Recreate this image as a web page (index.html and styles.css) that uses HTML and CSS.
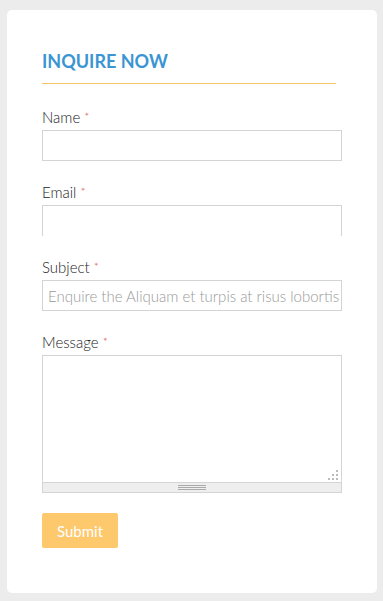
FILE: index.html
```html
<!DOCTYPE html>
<html lang="en">
<head>
    <meta charset="UTF-8">
    <meta name="viewport" content="width=device-width, initial-scale=1.0">
    <title>Inquire Now</title>
    <link rel="stylesheet" href="styles.css">
</head>
<body>
    <div class="card">
        <h2 class="title">INQUIRE NOW</h2>
        <form class="inquiry-form" onsubmit="return false">
            <div class="field">
                <label for="name">Name <span class="req">*</span></label>
                <input type="text" id="name">
            </div>
            <div class="field">
                <label for="email">Email <span class="req">*</span></label>
                <input type="email" id="email" class="open-bottom">
            </div>
            <div class="field">
                <label for="subject">Subject <span class="req">*</span></label>
                <input type="text" id="subject" placeholder="Enquire the Aliquam et turpis at risus lobortis">
            </div>
            <div class="field">
                <label for="message">Message <span class="req">*</span></label>
                <div class="textarea-wrap">
                    <textarea id="message"></textarea>
                    <svg class="corner-dots" width="10" height="10" viewBox="0 0 10 10">
                        <rect x="8" y="0" width="2" height="2" fill="#bbb"/>
                        <rect x="4" y="4" width="2" height="2" fill="#bbb"/>
                        <rect x="8" y="4" width="2" height="2" fill="#bbb"/>
                        <rect x="0" y="8" width="2" height="2" fill="#bbb"/>
                        <rect x="4" y="8" width="2" height="2" fill="#bbb"/>
                        <rect x="8" y="8" width="2" height="2" fill="#bbb"/>
                    </svg>
                    <div class="grippie"><span class="grip-lines"></span></div>
                </div>
            </div>
            <button type="submit" class="submit-btn">Submit</button>
        </form>
    </div>
</body>
</html>
```

FILE: styles.css
```css
* {
    margin: 0;
    padding: 0;
    box-sizing: border-box;
}
body
{
    background: #ececec;
    padding: 10px 6px 8px 7px;
    font-family: Lato, "Open Sans", sans-serif;
    color: #333;
}
.card
{
    background: #fff;
    border-radius: 5px;
    padding: 40px 35px 45px 35px;
    min-height: 583px;
}
.title
{
    font-size: 18px;
    line-height: 22px;
    font-weight: bold;
    color: #3b95d3;
    padding-bottom: 11px;
    border-bottom: 1px solid #f5c469;
    margin-right: 6px;
    margin-bottom: 23px;
}
.field
{
    margin-bottom: 21px;
}
.field label
{
    display: block;
    font-size: 15px;
    line-height: 20px;
    font-weight: 300;
    margin-bottom: 3px;
    color: #222;
}
.req
{
    color: #d9534f;
    font-size: 12px;
    vertical-align: top;
}
.field input
{
    display: block;
    width: 300px;
    height: 31px;
    border: 1px solid #d4d4d4;
    padding: 0 0 0 5px;
    font-family: Lato, sans-serif;
    font-size: 15px;
    font-weight: 300;
    color: #333;
    outline: none;
}
.field input::placeholder
{
    color: #999;
}
.field input.open-bottom
{
    border-bottom: none;
}
.textarea-wrap
{
    position: relative;
    width: 300px;
}
.textarea-wrap textarea
{
    display: block;
    width: 300px;
    height: 127px;
    border: 1px solid #d4d4d4;
    border-bottom: none;
    resize: none;
    outline: none;
    padding: 5px;
    font-family: Lato, sans-serif;
    font-size: 15px;
}
.corner-dots
{
    position: absolute;
    right: 4px;
    bottom: 13px;
}
.grippie
{
    height: 11px;
    background: #eee;
    border: 1px solid #d4d4d4;
    display: flex;
    justify-content: center;
    align-items: center;
}
.grip-lines
{
    width: 28px;
    height: 5px;
    border-top: 1px solid #aaa;
    border-bottom: 1px solid #aaa;
    background: linear-gradient(#aaa, #aaa) center / 100% 1px no-repeat;
}
.submit-btn
{
    margin-top: -1px;
    width: 76px;
    height: 35px;
    background: #fec86d;
    color: #fff;
    border: none;
    border-radius: 2px;
    font-family: Lato, sans-serif;
    font-size: 15px;
    cursor: pointer;
}
```
